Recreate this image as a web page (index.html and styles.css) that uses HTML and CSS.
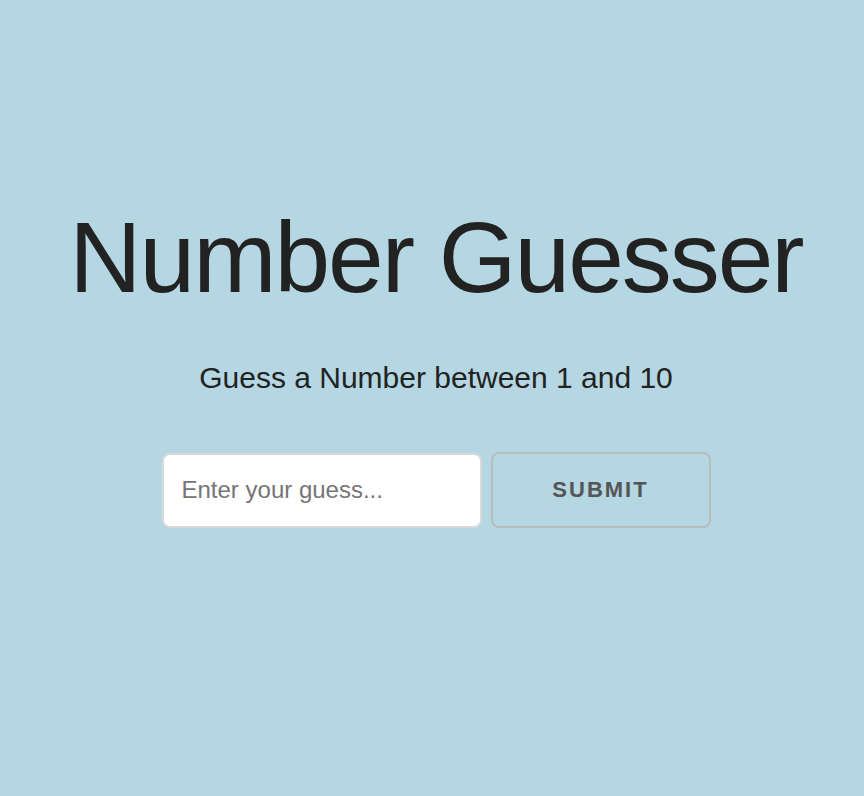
FILE: index.html
```html
<!DOCTYPE html>
<html lang="en">
<head>
<meta charset="utf-8">
<title>Number Guesser</title>
<link rel="stylesheet" href="styles.css">
</head>
<body>
<main class="container">
  <h1 class="title">Number Guesser</h1>
  <p class="subtitle">Guess a Number between 1 and 10</p>
  <form class="guess-form" onsubmit="return false;">
    <input class="guess-input" type="text" placeholder="Enter your guess...">
    <button class="submit-btn" type="submit">Submit</button>
  </form>
</main>
</body>
</html>
```
FILE: styles.css
```css
html, body {
  margin: 0;
  padding: 0;
  height: 100%;
}
body {
  background: #b5d7e3;
  font-family: "Liberation Sans", Arial, Helvetica, sans-serif;
  color: #222;
}
.container {
  display: flex;
  flex-direction: column;
  align-items: center;
  padding-top: 197px;
  padding-left: 8px;
}
.title {
  margin: 0 0 37px;
  font-size: 100px;
  font-weight: 400;
  line-height: 120px;
  letter-spacing: -2px;
}
.subtitle {
  margin: 0 0 50px;
  font-size: 30px;
  line-height: 48px;
}
.guess-form {
  display: flex;
  gap: 9px;
  align-items: center;
}
.guess-input {
  box-sizing: border-box;
  width: 320px;
  height: 75px;
  padding: 0 18px;
  border: 2px solid #d9d9d9;
  border-radius: 8px;
  background: #fff;
  font-family: "Liberation Sans", Arial, sans-serif;
  font-size: 24px;
  color: #333;
  outline: none;
}
.guess-input::placeholder {
  color: #757575;
}
.submit-btn {
  box-sizing: border-box;
  width: 220px;
  height: 76px;
  padding: 0;
  border: 2px solid #bbb;
  border-radius: 8px;
  background: transparent;
  color: #555;
  font-family: "Liberation Sans", Arial, sans-serif;
  font-size: 22px;
  font-weight: 700;
  letter-spacing: 2px;
  text-transform: uppercase;
  cursor: pointer;
}
```
